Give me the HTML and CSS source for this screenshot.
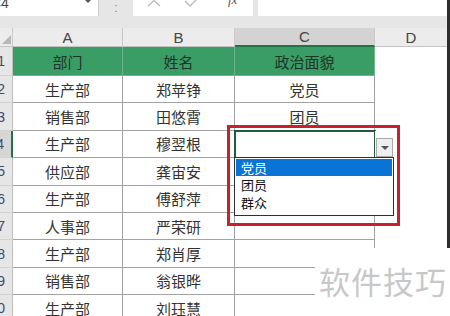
FILE: index.html
```html
<!DOCTYPE html>
<html lang="zh-CN">
<head>
  <meta charset="UTF-8" />
  <title>数据验证下拉列表</title>
  <link rel="stylesheet" href="styles.css">
</head>
<body>
  <div class="window">
    <div class="main">
      <div class="toolbar">
        <div class="namebox"><span class="cellref">C4</span><span class="caret"></span></div>
        <div class="grip">:</div>
        <div class="fxbox">
          <svg width="120" height="16" viewBox="0 0 120 16">
            <path d="M15 -5 L27 6 M27 -5 L15 6" stroke="#bcbcbc" stroke-width="1.4" fill="none"/>
            <path d="M52 1 L57 6 L67 -4" stroke="#bcbcbc" stroke-width="1.4" fill="none"/>
            <text x="95" y="4" class="fx">fx</text>
          </svg>
        </div>
        <div class="formula"></div>
      </div>
      <div class="band"></div>

      <div class="sheet">
        <div class="corner"><span class="tri"></span></div>
        <div class="colhead">A</div>
        <div class="colhead">B</div>
        <div class="colhead sel">C</div>
        <div class="colhead last">D</div>

        <div class="rowhead"><span>1</span></div>
        <div class="cell title">部门</div>
        <div class="cell title">姓名</div>
        <div class="cell title">政治面貌</div>
        <div class="blank"></div>

        <div class="rowhead"><span>2</span></div>
        <div class="cell">生产部</div>
        <div class="cell">郑苹铮</div>
        <div class="cell">党员</div>
        <div class="blank"></div>

        <div class="rowhead"><span>3</span></div>
        <div class="cell">销售部</div>
        <div class="cell">田悠霄</div>
        <div class="cell">团员</div>
        <div class="blank"></div>

        <div class="rowhead sel"><span>4</span></div>
        <div class="cell">生产部</div>
        <div class="cell">穆翌根</div>
        <div class="cell active"></div>
        <div class="blank"></div>

        <div class="rowhead"><span>5</span></div>
        <div class="cell">供应部</div>
        <div class="cell">龚宙安</div>
        <div class="cell"></div>
        <div class="blank"></div>

        <div class="rowhead"><span>6</span></div>
        <div class="cell">生产部</div>
        <div class="cell">傅舒萍</div>
        <div class="cell"></div>
        <div class="blank"></div>

        <div class="rowhead"><span>7</span></div>
        <div class="cell">人事部</div>
        <div class="cell">严荣研</div>
        <div class="cell"></div>
        <div class="blank"></div>

        <div class="rowhead"><span>8</span></div>
        <div class="cell">生产部</div>
        <div class="cell">郑肖厚</div>
        <div class="cell"></div>
        <div class="blank"></div>

        <div class="rowhead"><span>9</span></div>
        <div class="cell">销售部</div>
        <div class="cell">翁银晔</div>
        <div class="cell"></div>
        <div class="blank"></div>

        <div class="rowhead"><span>10</span></div>
        <div class="cell">生产部</div>
        <div class="cell">刘珏慧</div>
        <div class="cell"></div>
        <div class="blank"></div>
      </div>

      <!-- validation dropdown on C4 -->
      <div class="dd-button"><span class="dd-arrow"></span></div>
      <ul class="dd-list">
        <li class="on">党员</li>
        <li>团员</li>
        <li>群众</li>
      </ul>
      <div class="mark"></div>
    </div>
    <div class="edge"></div>
    <div class="watermark">软件技巧</div>
  </div>
</body>
</html>
```

FILE: styles.css
```css
:root {
  --frame: #e6e6e6;
  --head: #ececec;
  --line: #a3a3a3;
  --green: #3b9d66;
  --xl: #217346;
}

* { box-sizing: border-box; }

body {
  margin: 0;
  width: 450px;
  height: 316px;
  overflow: hidden;
  background: #fff;
  font-family: "Noto Sans CJK SC", sans-serif;
  color: #333;
}

.window {
  position: relative;
  display: flex;
  align-items: flex-start;
  height: 316px;
}

.main {
  position: relative;
  width: 447px;
  height: 316px;
  overflow: hidden;
}

.edge { width: 3px; height: 248px; background: #2d2d2d; }

/* formula bar */
.toolbar {
  display: flex;
  height: 16px;
  background: var(--frame);
}
.namebox {
  position: relative;
  width: 99px;
  background: #fff;
  border-right: 1px solid #cfcfcf;
  overflow: hidden;
}
.cellref {
  position: absolute;
  left: -9px;
  top: -5px;
  font: 14px "Liberation Sans", sans-serif;
  color: #444;
}
.caret {
  position: absolute;
  left: 85px;
  top: 0;
  border-left: 3px solid transparent;
  border-right: 3px solid transparent;
  border-top: 3px solid #555;
}
.grip {
  width: 34px;
  text-align: center;
  font: 12px/12px "Liberation Sans", sans-serif;
  color: #888;
  padding-top: 2px;
}
.fxbox {
  width: 120px;
  background: #fff;
  overflow: hidden;
}
.fxbox svg { display: block; }
.fx {
  font: italic 13px "Liberation Serif", serif;
  fill: #555;
}
.formula {
  flex: 1;
  margin-left: 5px;
  background: #fff;
}
.band { height: 12px; background: var(--frame); }

/* grid */
.sheet {
  display: grid;
  grid-template-columns: 13px 110px 112px 140px 72px;
  grid-template-rows: 19px 29px repeat(9, 27.4px);
}

.corner {
  position: relative;
  background: var(--head);
  border-right: 1px solid #c9c9c9;
  border-bottom: 1px solid #c4c4c4;
}
.tri {
  position: absolute;
  right: 1px;
  bottom: 2px;
  border-left: 9px solid transparent;
  border-bottom: 9px solid #b7b7b7;
}

.colhead {
  display: flex;
  align-items: center;
  justify-content: center;
  background: var(--head);
  border-right: 1px solid #c9c9c9;
  border-bottom: 1px solid #c4c4c4;
  font: 15px "Liberation Sans", sans-serif;
  color: #444;
}
.colhead.sel {
  background: #d3d3d3;
  border-bottom: 2px solid var(--xl);
}
.colhead.last { border-right: none; }

.rowhead {
  display: flex;
  align-items: center;
  justify-content: flex-end;
  background: var(--frame);
  border-right: 1px solid #bfbfbf;
  border-bottom: 1px solid #d2d2d2;
  overflow: hidden;
  padding-right: 7px;
  font: 14px "Liberation Sans", sans-serif;
  color: #3d4a6a;
}
.rowhead span { flex-shrink: 0; white-space: nowrap; }
.rowhead.sel {
  background: #d6d6d6;
  border-right: 2px solid var(--xl);
}

.cell {
  display: flex;
  align-items: center;
  justify-content: center;
  border-right: 1px solid var(--line);
  border-bottom: 1px solid var(--line);
  font-size: 15px;
  color: #333;
}
.cell.title {
  background: var(--green);
  color: #1c3527;
  border-color: #6fb48c;
}
.cell.active {
  outline: 2px solid #1e5e3a;
  outline-offset: -1px;
}

.blank { background: #fff; }

/* data validation list */
.dd-button {
  position: absolute;
  left: 376px;
  top: 138px;
  width: 17px;
  height: 19px;
  background: #eeeeee;
  border: 1px solid #a9a9a9;
  display: flex;
  align-items: center;
  justify-content: center;
}
.dd-arrow {
  border-left: 4px solid transparent;
  border-right: 4px solid transparent;
  border-top: 4px solid #555;
}
.dd-list {
  position: absolute;
  left: 234px;
  top: 157px;
  width: 160px;
  height: 59px;
  margin: 0;
  padding: 1px;
  list-style: none;
  background: #fff;
  border: 1px solid #2f2f2f;
}
.dd-list li {
  height: 17.3px;
  padding-left: 5px;
  font-size: 13px;
  line-height: 17px;
  color: #111;
}
.dd-list li.on {
  background: #0a74d6;
  color: #fff;
}

.mark {
  position: absolute;
  left: 227px;
  top: 125px;
  width: 173px;
  height: 101px;
  border: 3.5px solid #c7222c;
}

.watermark {
  position: absolute;
  left: 315px;
  top: 248px;
  width: 135px;
  height: 68px;
  background: #fff;
  padding: 14px 0 0 4px;
  font-size: 31px;
  line-height: 38px;
  letter-spacing: 1px;
  color: #c8c8c8;
  white-space: nowrap;
}
```
